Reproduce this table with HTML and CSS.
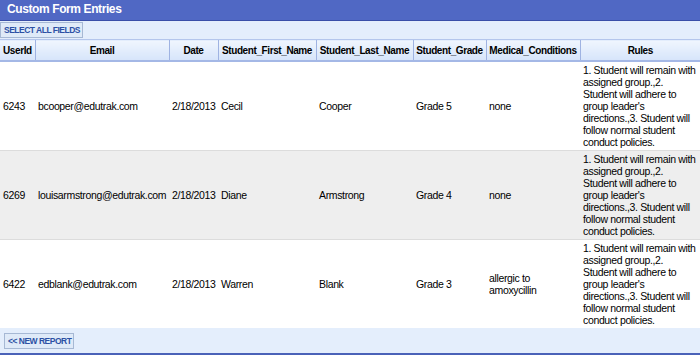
FILE: index.html
```html
<!DOCTYPE html>
<html>
<head>
<meta charset="utf-8">
<link rel="stylesheet" href="styles.css">
</head>
<body>
<div class="panel">
  <div class="titlebar">Custom Form Entries</div>
  <div class="toolbar"><button class="btn">SELECT ALL FIELDS</button></div>
  <table class="grid">
    <colgroup>
      <col class="c-id"><col class="c-email"><col class="c-date"><col class="c-first"><col class="c-last"><col class="c-grade"><col class="c-med"><col class="c-rules">
    </colgroup>
    <thead>
      <tr>
        <th class="left">UserId</th><th>Email</th><th>Date</th><th>Student_First_Name</th><th>Student_Last_Name</th><th>Student_Grade</th><th>Medical_Conditions</th><th>Rules</th>
      </tr>
    </thead>
    <tbody>
      <tr>
        <td>6243</td><td>bcooper@edutrak.com</td><td>2/18/2013</td><td>Cecil</td><td>Cooper</td><td>Grade 5</td><td>none</td>
        <td>1. Student will remain with assigned group.,2. Student will adhere to group leader's directions.,3. Student will follow normal student conduct policies.</td>
      </tr>
      <tr class="alt">
        <td>6269</td><td>louisarmstrong@edutrak.com</td><td>2/18/2013</td><td>Diane</td><td>Armstrong</td><td>Grade 4</td><td>none</td>
        <td>1. Student will remain with assigned group.,2. Student will adhere to group leader's directions.,3. Student will follow normal student conduct policies.</td>
      </tr>
      <tr>
        <td>6422</td><td>edblank@edutrak.com</td><td>2/18/2013</td><td>Warren</td><td>Blank</td><td>Grade 3</td><td>allergic to amoxycillin</td>
        <td>1. Student will remain with assigned group.,2. Student will adhere to group leader's directions.,3. Student will follow normal student conduct policies.</td>
      </tr>
    </tbody>
  </table>
  <div class="footer"><button class="btn btn-new">&lt;&lt; NEW REPORT</button></div>
</div>
</body>
</html>
```
FILE: styles.css
```css
html, body {
  margin: 0;
  padding: 0;
  background: #ffffff;
}
body {
  font-family: "Liberation Sans", Arial, sans-serif;
  font-size: 10.5px;
  letter-spacing: -0.35px;
  color: #000;
}
.panel {
  width: 700px;
}
.titlebar {
  height: 20px;
  background: #5068c4;
  border-bottom: 1px solid #3a4fa8;
  color: #fff;
  font-weight: bold;
  font-size: 12px;
  letter-spacing: -0.4px;
  line-height: 19px;
  padding-left: 7px;
}
.toolbar {
  background: #e4eefc;
  height: 17px;
  padding-top: 1px;
}
.btn {
  display: block;
  margin: 0;
  font-family: "Liberation Sans", Arial, sans-serif;
  font-weight: bold;
  font-size: 8.5px;
  letter-spacing: -0.5px;
  color: #2c50a4;
  background: #dfeaf8;
  border: 1px solid #a6b8d4;
  height: 16px;
  padding: 0 2px 0 3px;
  line-height: 14px;
  cursor: pointer;
}
.grid {
  width: 700px;
  border-collapse: collapse;
  table-layout: fixed;
}
.c-id { width: 35px; }
.c-email { width: 134px; }
.c-date { width: 49px; }
.c-first { width: 98px; }
.c-last { width: 97px; }
.c-grade { width: 73px; }
.c-med { width: 94px; }
.c-rules { width: 120px; }
.grid th {
  height: 20px;
  padding: 0;
  font-weight: bold;
  font-size: 10px;
  letter-spacing: -0.4px;
  text-align: center;
  white-space: nowrap;
  background: linear-gradient(#f0f6fe, #d6e4fa);
  border-top: 1px solid #b4c6ec;
  border-bottom: 2px solid #a4b8e6;
  border-left: 1px solid #9fb3e2;
  overflow: hidden;
}
.grid th:first-child { border-left: 0; }
.grid th.left { text-align: left; padding-left: 3px; }
.grid td {
  padding: 2px 3px;
  line-height: 12px;
  vertical-align: middle;
  border-top: 1px solid #dcdcdc;
}
.grid tbody tr:first-child td { border-top: 0; }
.grid tr.alt td { background: #eeeeee; }
.footer {
  background: #e4eefc;
  height: 25px;
  border-bottom: 2px solid #4a62b8;
  display: flex;
  align-items: center;
  padding-left: 4px;
}
.btn-new {
  height: 16px;
}
```
